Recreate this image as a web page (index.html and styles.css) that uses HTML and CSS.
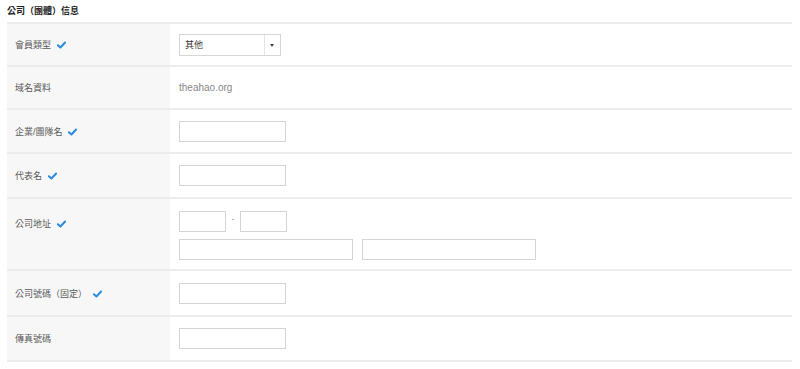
FILE: index.html
```html
<!DOCTYPE html>
<html>
<head>
    <meta charset="UTF-8">
    <title>公司信息</title>
    <link rel="stylesheet" href="styles.css">
</head>
<body>
    <div class="section">
        <h2 class="section-title">公司（團體）信息</h2>

        <table class="form-table">
            <tr class="row-type">
                <th>會員類型 <svg class="check" viewBox="0 0 10 8"><path d="M1 4.2 L3.8 6.8 L9 1.2" /></svg></th>
                <td>
                    <div class="select">
                        <span class="select-value">其他</span>
                        <span class="select-arrow"></span>
                    </div>
                </td>
            </tr>
            <tr class="row-domain">
                <th>域名資料</th>
                <td><span class="domain">theahao.org</span></td>
            </tr>
            <tr class="row-company">
                <th>企業/團隊名 <svg class="check" viewBox="0 0 10 8"><path d="M1 4.2 L3.8 6.8 L9 1.2" /></svg></th>
                <td><input class="input" type="text"></td>
            </tr>
            <tr class="row-rep">
                <th>代表名 <svg class="check" viewBox="0 0 10 8"><path d="M1 4.2 L3.8 6.8 L9 1.2" /></svg></th>
                <td><input class="input" type="text"></td>
            </tr>
            <tr class="row-address">
                <th class="address-label">公司地址 <svg class="check" viewBox="0 0 10 8"><path d="M1 4.2 L3.8 6.8 L9 1.2" /></svg></th>
                <td class="address-cell">
                    <div class="zip-line">
                        <input class="input input-zip" type="text">
                        <span class="dash">-</span>
                        <input class="input input-zip" type="text">
                    </div>
                    <div class="addr-line">
                        <input class="input input-addr" type="text">
                        <input class="input input-addr" type="text">
                    </div>
                </td>
            </tr>
            <tr class="row-phone">
                <th>公司號碼（固定） <svg class="check" viewBox="0 0 10 8"><path d="M1 4.2 L3.8 6.8 L9 1.2" /></svg></th>
                <td><input class="input" type="text"></td>
            </tr>
            <tr class="row-fax">
                <th>傳真號碼</th>
                <td><input class="input" type="text"></td>
            </tr>
        </table>
    </div>
</body>
</html>
```

FILE: styles.css
```css
body {
    margin: 0;
    padding: 0 8px 0 7px;
    font-family: "Liberation Sans", Arial, "Noto Sans CJK TC", sans-serif;
    font-size: 9px;
    color: #444;
    background: #fff;
}
.section-title {
    margin: 0;
    padding-top: 4px;
    height: 18px;
    font-size: 9px;
    font-weight: bold;
    color: #222;
}
.form-table {
    width: 100%;
    border-collapse: collapse;
    border-top: 2px solid #ececec;
}
.form-table th,
.form-table td {
    border-bottom: 2px solid #ececec;
    vertical-align: middle;
}
.form-table th {
    width: 155px;
    padding: 0 0 0 8px;
    background: #f7f7f7;
    text-align: left;
    font-weight: normal;
    color: #5a5a5a;
    white-space: nowrap;
}
.form-table td {
    padding: 0 0 0 9px;
}
.form-table .address-label {
    vertical-align: top;
    padding-top: 18px;
}
.form-table .address-cell {
    padding-top: 3px;
}
.row-type { height: 43px; }
.row-domain { height: 43px; }
.row-company { height: 44px; }
.row-rep { height: 45px; }
.row-address { height: 72px; }
.row-phone { height: 46px; }
.row-fax { height: 45px; }
.check {
    width: 9px;
    height: 8px;
    margin-left: 3px;
    vertical-align: -1px;
}
.check path {
    fill: none;
    stroke: #2a8be0;
    stroke-width: 2.2;
    stroke-linecap: round;
    stroke-linejoin: round;
}
.select {
    display: flex;
    width: 102px;
    height: 22px;
    border: 1px solid #d6d6d6;
    box-sizing: border-box;
    background: #fff;
}
.select-value {
    flex: 1;
    padding-left: 5px;
    line-height: 20px;
    color: #333;
}
.select-arrow {
    width: 15px;
    border-left: 1px solid #e4e4e4;
    position: relative;
}
.select-arrow::after {
    content: "";
    position: absolute;
    left: 5px;
    top: 9px;
    border-left: 2.5px solid transparent;
    border-right: 2.5px solid transparent;
    border-top: 3px solid #444;
}
.domain {
    color: #888;
    font-size: 10px;
}
.input {
    display: block;
    width: 107px;
    height: 21px;
    margin: 0;
    padding: 0;
    border: 1px solid #d4d4d4;
    box-sizing: border-box;
    background: #fff;
}
.zip-line,
.addr-line {
    display: flex;
    align-items: center;
}
.zip-line {
    margin-bottom: 7px;
}
.input-zip {
    width: 47px;
}
.dash {
    width: 14px;
    text-align: center;
    color: #999;
    margin-top: -6px;
}
.input-addr {
    width: 174px;
    margin-right: 9px;
}
```
